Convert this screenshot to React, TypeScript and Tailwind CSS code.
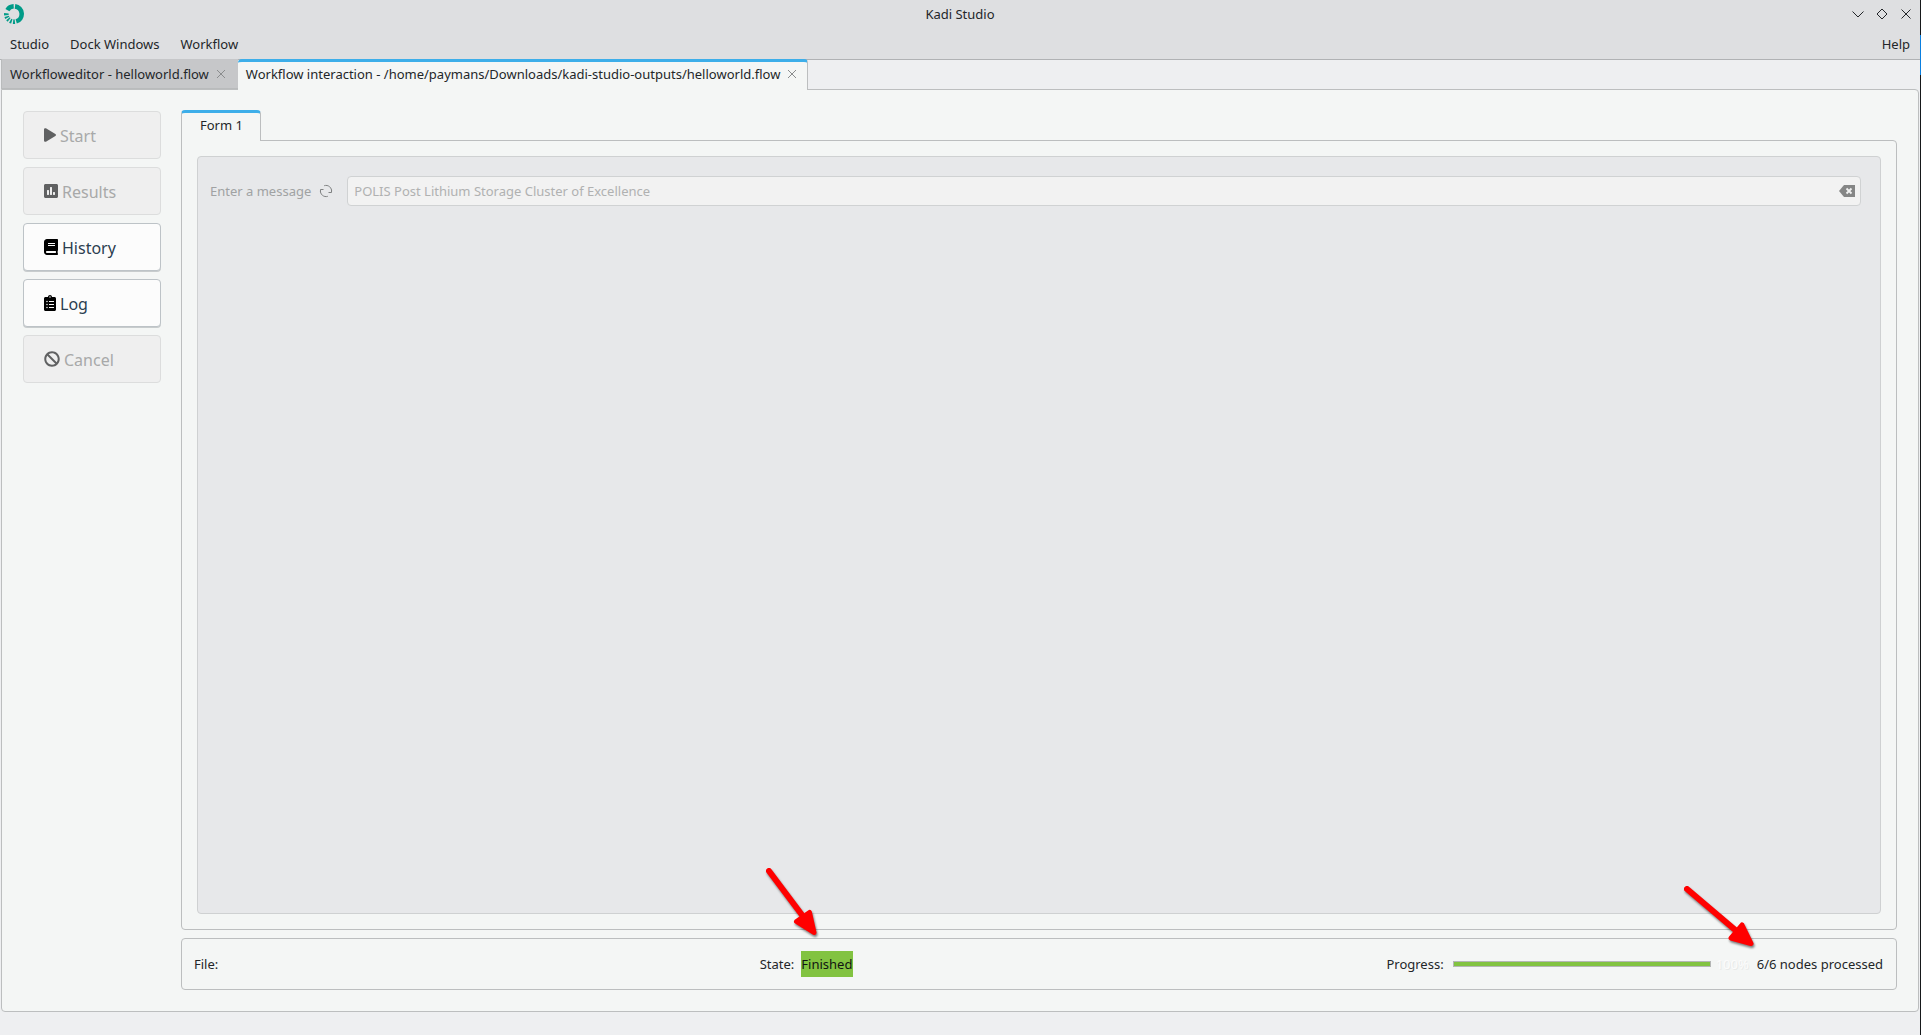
import { useState } from "react";
import type { ReactNode } from "react";
import { FaPlay, FaPoll, FaBook, FaClipboardList, FaBan } from "react-icons/fa";

interface SideAction {
  id: string;
  text: string;
  icon: ReactNode;
  disabled: boolean;
}

const sideActions: SideAction[] = [
  { id: "start", text: "Start", icon: <FaPlay className="w-3 h-3.5" />, disabled: true },
  { id: "results", text: "Results", icon: <FaPoll className="w-3.5 h-4" />, disabled: true },
  { id: "history", text: "History", icon: <FaBook className="w-3.5 h-4" />, disabled: false },
  { id: "log", text: "Log", icon: <FaClipboardList className="w-3 h-4" />, disabled: false },
  { id: "cancel", text: "Cancel", icon: <FaBan className="w-4 h-4" />, disabled: true },
];

const menus = ["Studio", "Dock Windows", "Workflow"];

function KadiLogo() {
  return (
    <svg width="20" height="20" viewBox="0 0 20 20" fill="none" stroke="#009b88" strokeWidth="4.6">
      <path d="M11 2.37 A7.7 7.7 0 0 1 12.2 17.38" />
      <path d="M3.4 6.1 A7.7 7.7 0 0 1 9.7 2.3" />
      <path d="M10.9 17.65 A7.7 7.7 0 0 1 9.1 17.65" />
      <path d="M7.8 17.4 A7.7 7.7 0 0 1 6.2 16.7" />
      <path d="M5.1 15.9 A7.7 7.7 0 0 1 4 14.8" />
      <path d="M3.3 13.8 A7.7 7.7 0 0 1 2.7 12.4" />
      <path d="M2.4 11.2 A7.7 7.7 0 0 1 2.4 9.2" />
    </svg>
  );
}

function TabClose({ label }: { label: string }) {
  return (
    <button type="button" aria-label={label} className="text-[#8a8c8d]">
      <svg width="10" height="10" viewBox="0 0 10 10" stroke="currentColor" fill="none">
        <path d="M1 1 L9 9 M9 1 L1 9" />
      </svg>
    </button>
  );
}

function TitleBar() {
  return (
    <div className="grid grid-cols-3 items-center h-7 px-1">
      <KadiLogo />
      <h1 className="text-center">Kadi Studio</h1>
      <div className="flex justify-end gap-3 pr-1">
        <button type="button" aria-label="Minimize">
          <svg width="12" height="12" viewBox="0 0 12 12" stroke="currentColor" fill="none">
            <path d="M0.5 3.5 L6 9 L11.5 3.5" />
          </svg>
        </button>
        <button type="button" aria-label="Maximize">
          <svg width="12" height="12" viewBox="0 0 12 12" stroke="currentColor" fill="none">
            <path d="M6 1 L11 6 L6 11 L1 6 Z" />
          </svg>
        </button>
        <button type="button" aria-label="Close">
          <svg width="12" height="12" viewBox="0 0 12 12" stroke="currentColor" fill="none">
            <path d="M1.5 1.5 L10.5 10.5 M10.5 1.5 L1.5 10.5" />
          </svg>
        </button>
      </div>
    </div>
  );
}

export default function App() {
  const [message, setMessage] = useState("POLIS Post Lithium Storage Cluster of Excellence");

  return (
    <div className="flex h-screen bg-[#eeeff1] font-['Noto_Sans',sans-serif] text-[13px] leading-5 text-[#232629]">
      <div className="flex-1 min-w-0 flex flex-col">
        <header className="bg-[#dedfe1] border-b border-[#b0b2b4]">
          <TitleBar />
          <nav className="flex items-center gap-[21px] h-[31px] px-2.5">
            {menus.map((menu) => (
              <button key={menu} type="button">
                {menu}
              </button>
            ))}
            <button type="button" className="ml-auto">Help</button>
          </nav>
        </header>

        {/* Document tabs */}
        <div className="flex h-[30px] px-px -mt-px relative z-10">
          <div className="flex items-center gap-[7px] pl-2 pr-3 bg-[#c6c7c9] border-b border-l border-[#b9bbbc]">
            <a href="#editor">Workfloweditor - helloworld.flow</a>
            <TabClose label="Close Workfloweditor" />
          </div>
          <div className="flex items-center gap-[7px] pl-2 pr-2.5 pb-1 -mb-px bg-[#f4f6f5] border-t-3 border-t-[#3daee9] border-r border-r-[#bcbebf] rounded-t-sm">
            <a href="#interaction">Workflow interaction - /home/paymans/Downloads/kadi-studio-outputs/helloworld.flow</a>
            <TabClose label="Close Workflow interaction" />
          </div>
        </div>

        <main className="flex-1 min-h-0 flex ml-px mr-px mb-[23px] bg-[#f4f6f5] border border-[#bcbebf] rounded-b-sm rounded-tr-sm">
          <aside className="flex flex-col gap-2 w-[138px] ml-[21px] mr-5 pt-[21px]">
            {sideActions.map((action) => (
              <button
                key={action.id}
                type="button"
                disabled={action.disabled}
                className="flex items-center gap-1 h-12 pl-5 text-base bg-[#fcfcfc] border border-[#bdc3c7] rounded-sm text-[#2c3e50] shadow-[0_1px_0_#c8cccd] disabled:bg-[#efefef] disabled:border-[#dcdddd] disabled:text-[#a8a9a9] disabled:shadow-none"
              >
                <span className={action.disabled ? "text-[#606162]" : "text-black"}>{action.icon}</span>
                <span className="pt-0.5">{action.text}</span>
              </button>
            ))}
          </aside>

          <div className="flex-1 min-w-0 flex flex-col pt-5 pb-[21px] pr-[21px]">
            <div className="flex relative z-10">
              <button
                type="button"
                className="h-[31px] pl-[18px] pr-[17px] pb-1 bg-[#f4f6f5] border-t-3 border-t-[#3daee9] border-x border-x-[#bcbebf] rounded-t-sm"
              >
                Form 1
              </button>
            </div>
            <section className="flex-1 min-h-0 flex -mt-px p-[15px] border border-[#bcbebf] rounded-sm rounded-tl-none">
              <div className="flex-1 px-3 pt-[19px] bg-[#e7e8ea] border border-[#cfd1d2] rounded-sm text-[#a0a2a3]">
                <div className="flex items-center pr-[7px]">
                  <label htmlFor="message">Enter a message</label>
                  <button type="button" aria-label="Reset message" className="ml-2 mr-3.5">
                    <svg width="14" height="14" viewBox="0 0 14 14" fill="none" stroke="#808283">
                      <path d="M5.2 1.7 A5.6 5.6 0 0 1 12.5 8 M8.8 12.3 A5.6 5.6 0 0 1 1.5 6" />
                      <path d="M9.5 8.5 H12.5 V5.5 M4.5 5.5 H1.5 V8.5" />
                    </svg>
                  </button>
                  <div className="flex-1 flex items-center h-[30px] pl-1.5 pr-[5px] bg-[#f2f2f2] border border-[#d0d2d3] rounded-sm">
                    <input
                      id="message"
                      type="text"
                      disabled
                      value={message}
                      onChange={(e) => setMessage(e.target.value)}
                      className="flex-1 text-[#b0b1b1] outline-none"
                    />
                    <button type="button" aria-label="Clear message" onClick={() => setMessage("")}>
                      <svg width="16" height="12" viewBox="0 0 16 12">
                        <path d="M0 6 L5 0 H16 V12 H5 Z" fill="#858686" />
                        <path d="M7.5 3.5 L12.5 8.5 M12.5 3.5 L7.5 8.5" stroke="#f2f2f2" strokeWidth="1.8" />
                      </svg>
                    </button>
                  </div>
                </div>
              </div>
            </section>

            {/* Run status */}
            <footer className="grid grid-cols-3 gap-2 items-center h-[52px] mt-2 pl-3 pr-[13px] border border-[#bcbebf] rounded-sm">
              <span>File:</span>
              <div className="flex items-center gap-[7px]">
                <span>State:</span>
                <span className="relative py-[3px] pr-px bg-[#82c341] text-[#111411]">
                  Finished
                  <svg
                    className="absolute -left-9 -top-[84px] drop-shadow-[1px_2px_1px_rgba(0,0,0,0.5)]"
                    width="60" height="80" viewBox="0 0 60 80"
                    stroke="red" fill="red" strokeLinecap="round" strokeLinejoin="round"
                  >
                    <path d="M4 4 L40 52" strokeWidth="6" />
                    <path d="M49 65.5 L31.5 54.5 L44.5 45.5 Z" strokeWidth="5" />
                  </svg>
                </span>
              </div>
              <div className="flex items-center justify-end">
                <span id="progress-label">Progress:</span>
                <div
                  role="progressbar"
                  aria-labelledby="progress-label"
                  aria-valuenow={100}
                  className="w-[258px] h-1.5 ml-[9px] bg-[#82c341] border border-[#b4b6b5]"
                />
                <span className="ml-[5px] text-[#fcfcfc] [text-shadow:1px_1px_0_#e8eae9]">100%</span>
                <span className="relative ml-2">
                  6/6 nodes processed
                  <svg
                    className="absolute -left-[74px] -top-[69px] drop-shadow-[1px_2px_1px_rgba(0,0,0,0.5)]"
                    width="80" height="70" viewBox="0 0 80 70"
                    stroke="red" fill="red" strokeLinecap="round" strokeLinejoin="round"
                  >
                    <path d="M4 4 L57 49" strokeWidth="6" />
                    <path d="M68 58.5 L48 53 L59 40 Z" strokeWidth="5" />
                  </svg>
                </span>
              </div>
            </footer>
          </div>
        </main>
      </div>

      {/* Sliver of the desktop behind the window */}
      <div className="w-px bg-[#16181a] pt-[35px]">
        <div className="h-10 bg-[#0a7fe0]" />
      </div>
    </div>
  );
}
